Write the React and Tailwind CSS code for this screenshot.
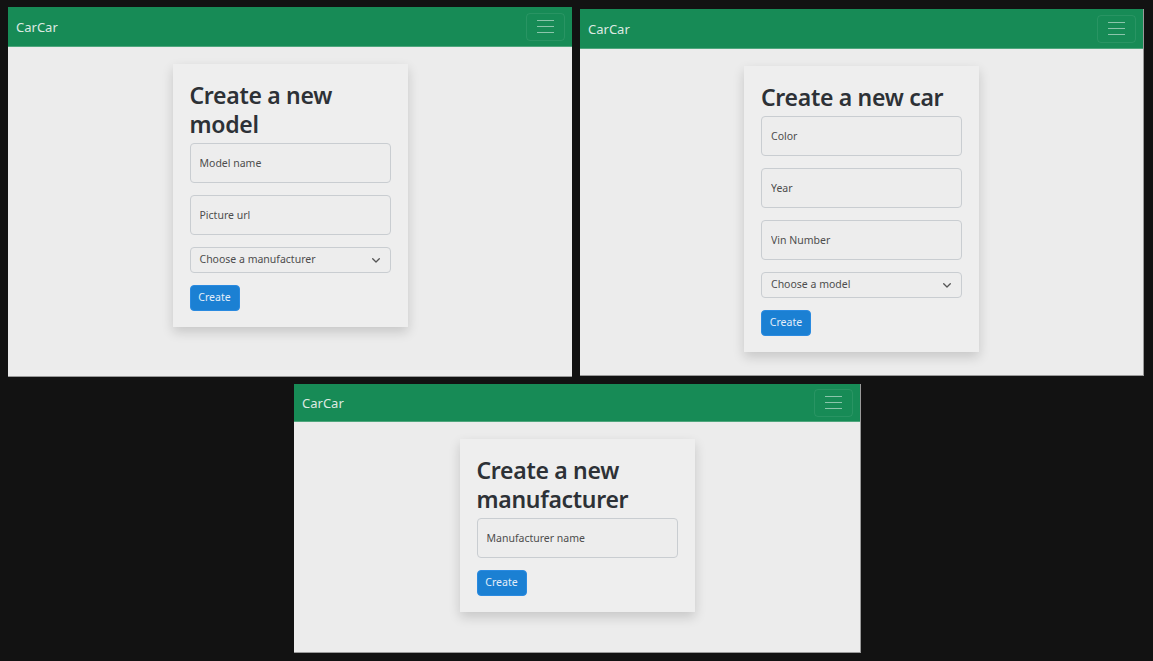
const font = { fontFamily: '"Noto Sans", "Open Sans", Arial, sans-serif' };

function Toggler() {
    return (
        <button className="w-[39px] h-[28px] rounded-[4px] border border-[#ffffff14] flex flex-col items-center justify-center gap-[4.5px]">
            <span className="block w-[17px] h-[1.5px] bg-[#ffffff80]"></span>
            <span className="block w-[17px] h-[1.5px] bg-[#ffffff80]"></span>
            <span className="block w-[17px] h-[1.5px] bg-[#ffffff80]"></span>
        </button>
    );
}

function Navbar({ tall = true }) {
    return (
        <nav className={`${tall ? 'h-[40px]' : 'h-[38px]'} shrink-0 bg-[#178b56] border-b border-[#4fa67d] flex items-center justify-between pl-[8px] pr-[7px]`}>
            <span className="text-[13px] text-[#dde9e2] translate-y-[0.5px]">CarCar</span>
            <Toggler />
        </nav>
    );
}

function Field({ label }) {
    return (
        <input
            placeholder={label}
            className="block w-full h-[40px] mb-[12px] px-[9px] bg-[#ededed] border border-[#c9cdd1] rounded-[4px] text-[10.5px] text-[#333] placeholder:text-[#4d4d4d] outline-none"
        />
    );
}

function Choose({ label }) {
    return (
        <div className="w-full h-[26px] mb-[12px] pl-[9px] pr-[10px] flex items-center justify-between bg-[#ededed] border border-[#c9cdd1] rounded-[4px]">
            <span className="text-[10.5px] text-[#4d4d4d]">{label}</span>
            <svg width="8" height="5" viewBox="0 0 8 5" fill="none">
                <path d="M0.7 0.7 4 4 7.3 0.7" stroke="#555" strokeWidth="1.3" strokeLinecap="round" strokeLinejoin="round" />
            </svg>
        </div>
    );
}

function FormCard({ title, children }) {
    return (
        <div className="mt-[17px] mx-auto w-[235px] px-[17px] pt-[17px] pb-[16px] bg-[#eeeeee] shadow-[0_5px_11px_rgba(0,0,0,0.16)]">
            <h1 className="text-[23px] leading-[29px] font-semibold tracking-[-0.3px] text-[#2d3136] mb-[4px]">{title}</h1>
            {children}
            <button className="block w-[50px] h-[26px] rounded-[4px] bg-[#1b80d3] border border-[#2a8ae0] text-[10.5px] text-[#e4eef9]">
                Create
            </button>
        </div>
    );
}

function Panel({ className, tall, children }) {
    return (
        <div className={`flex flex-col bg-[#ececec] overflow-hidden ${className}`}>
            <Navbar tall={tall} />
            <div className="flex-1 flex flex-col">{children}</div>
        </div>
    );
}

export default function App() {
    return (
        <div style={font} className="w-[1153px] h-[661px] bg-[#121212] overflow-hidden pt-[7px] pl-[8px]">
            <div className="flex items-start gap-[8px]">
                <Panel className="w-[564px] h-[370px] border-b border-[#9a9a9a]">
                    <FormCard title="Create a new model">
                        <Field label="Model name" />
                        <Field label="Picture url" />
                        <Choose label="Choose a manufacturer" />
                    </FormCard>
                </Panel>
                <Panel className="mt-[2px] w-[564px] h-[367px] border-r border-b border-[#9a9a9a]">
                    <FormCard title="Create a new car">
                        <Field label="Color" />
                        <Field label="Year" />
                        <Field label="Vin Number" />
                        <Choose label="Choose a model" />
                    </FormCard>
                </Panel>
            </div>
            <Panel className="mt-[7px] ml-[286px] w-[567px] h-[269px] border-r border-b border-[#9a9a9a]" tall={false}>
                <FormCard title="Create a new manufacturer">
                    <Field label="Manufacturer name" />
                </FormCard>
            </Panel>
        </div>
    );
}
